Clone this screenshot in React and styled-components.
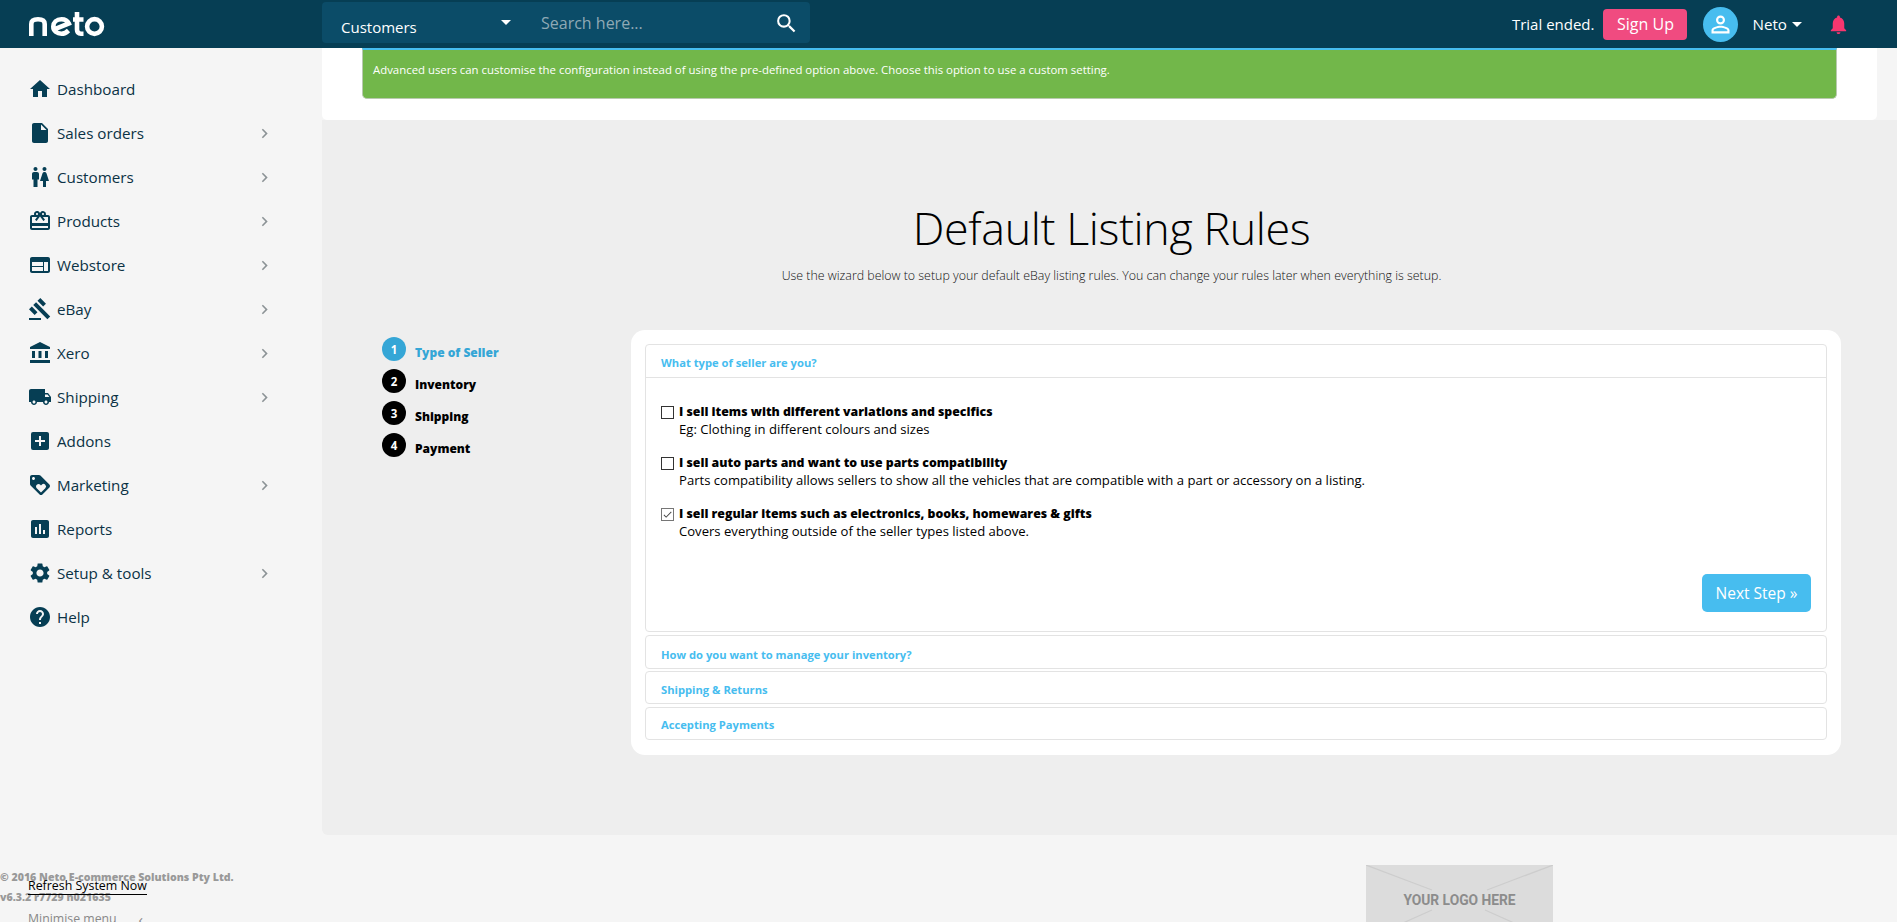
import React from 'react';
import styled, { createGlobalStyle } from 'styled-components';
import {
  MdHome, MdInsertDriveFile, MdWc, MdCardGiftcard, MdWeb, MdGavel, MdAccountBalance,
  MdLocalShipping, MdAddBox, MdLoyalty, MdAssessment, MdSettings, MdHelp, MdChevronRight,
  MdSearch, MdPersonOutline, MdNotifications, MdArrowDropDown, MdCheck,
} from 'react-icons/md';

const Global = createGlobalStyle`
  html, body { margin: 0; padding: 0; height: 922px; overflow: hidden; background: #f5f5f5; }
  body { font-family: "Open Sans", "Noto Sans", sans-serif; color: #000; }
  * { box-sizing: border-box; }
`;

const Page = styled.div`
  width: 1897px; height: 922px; overflow: hidden; display: flex; flex-direction: column;
`;
const Header = styled.header`
  height: 48px; flex: none; background: #063e54; display: flex; align-items: flex-start; color: #fff;
`;
const LogoSlot = styled.div`
  width: 322px; height: 48px; padding: 11px 0 0 28px; flex: none;
`;
const SearchBar = styled.div`
  width: 488px; height: 41px; margin-top: 2px; background: #0b4c68; border-radius: 4px;
  display: flex; align-items: flex-start; position: relative;
`;
const SearchScope = styled.div`
  width: 219px; padding: 15px 0 0 19px; font-size: 15px; line-height: 20px; flex: none; position: relative;
`;
const ScopeCaret = styled.span`
  position: absolute; left: 172px; top: 8px; display: flex; font-size: 24px;
`;
const SearchHint = styled.div`
  flex: 1; padding-top: 10px; font-size: 16px; line-height: 22px; color: #8fa9b5;
`;
const SearchIcon = styled.div`
  width: 36px; padding-top: 9px; display: flex; font-size: 25px;
`;
const HeadRight = styled.div`
  margin-left: auto; height: 48px; display: flex; align-items: center; padding-right: 47px;
`;
const Trial = styled.span`
  font-size: 15px; margin-right: 9px;
`;
const SignUp = styled.span`
  width: 84px; height: 31px; background: #f04b80; border-radius: 4px; font-size: 16px;
  display: flex; align-items: center; justify-content: center; margin-right: 16px;
`;
const Avatar = styled.span`
  width: 35px; height: 35px; background: #47bdef; border-radius: 50%; display: flex;
  align-items: center; justify-content: center; font-size: 27px; margin-right: 14px;
`;
const UserName = styled.span`
  font-size: 15.2px; display: flex; align-items: center; margin-right: 24px;
`;
const UserCaret = styled.span`
  display: flex; font-size: 24px; margin: 0 -6px 0 -2px;
`;
const Bell = styled.span`
  display: flex; font-size: 23px; color: #f8366f;
`;

const Body = styled.div`
  flex: 1; display: flex; min-height: 0;
`;
const Sidebar = styled.aside`
  width: 322px; flex: none; display: flex; flex-direction: column; position: relative;
`;
const Nav = styled.nav`
  padding: 19px 0 0 28px; display: flex; flex-direction: column;
`;
const NavRow = styled.div`
  height: 44px; display: flex; align-items: center; position: relative; width: 246px; color: #0b3245;
  font-size: 15.2px;
`;
const NavIcon = styled.span`
  width: 29px; flex: none; font-size: 24px; display: flex; color: #063e54;
`;
const NavChevron = styled.span`
  margin-left: auto; display: flex; font-size: 19px; color: #8c9396;
`;
const SideFoot = styled.div`
  position: absolute; left: 0; top: 816px; width: 322px;
`;
const Copyright = styled.div`
  position: absolute; left: 0; top: 3px; font-size: 10.6px; line-height: 20px; font-weight: 800; color: #999; white-space: nowrap;
`;
const Refresh = styled.a`
  position: absolute; left: 28px; top: 14px; font-size: 12.4px; line-height: 16px; color: #000;
  border-bottom: 1px solid #000; white-space: nowrap;
`;
const Minimise = styled.div`
  position: absolute; left: 28px; top: 46px; width: 115px; display: flex; align-items: center;
  justify-content: space-between; font-size: 12.3px; line-height: 18px; color: #888;
`;
const SmallChevron = styled.span`
  font-size: 15px; line-height: 18px;
`;

const Main = styled.main`
  flex: 1; display: flex; flex-direction: column; min-width: 0;
`;
const TopCard = styled.div`
  height: 72px; margin-right: 20px; background: #fff; border-radius: 0 0 5px 5px; padding: 0 40px 0 40px; flex: none;
`;
const Banner = styled.div`
  height: 51px; background: #72b74a; border-top: 2px solid #47bdef; border-bottom: 1px solid #b9c9b0;
  border-right: 1px solid #b9c9b0; border-left: 1px solid #b9c9b0; border-radius: 0 0 5px 5px; color: #fff; font-size: 11.4px;
  padding: 12px 0 0 10px; line-height: 16px;
`;
const Stage = styled.div`
  height: 715px; flex: none; background: #eee; border-radius: 0 0 0 6px; position: relative; padding-top: 78px;
`;
const Title = styled.h1`
  margin: 0; padding-left: 4px; text-align: center; font-weight: 300; font-size: 44.8px; line-height: 60px; color: #000; letter-spacing: -0.4px;
`;
const Subtitle = styled.p`
  margin: 9px 0 0; padding-left: 4px; text-align: center; font-size: 12.4px; font-weight: 300; line-height: 18px; color: #111;
`;
const Wizard = styled.div`
  display: flex; margin-top: 45px; padding-left: 60px;
`;
const Steps = styled.ol`
  list-style: none; margin: 7px 0 0; padding: 0; width: 249px; flex: none; display: flex; flex-direction: column; gap: 8px;
`;
const Step = styled.li`
  height: 24px; display: flex; align-items: center; gap: 9px; font-size: 12px; font-weight: 800;
  color: ${p => (p.$active ? '#35a6d6' : '#000')};
`;
const StepLabel = styled.span`
  padding-top: 8px; line-height: 16px;
`;
const StepDot = styled.span`
  width: 24px; height: 24px; border-radius: 50%; display: flex; align-items: center; justify-content: center;
  font-size: 11.5px; font-weight: 700; color: #fff; background: ${p => (p.$active ? '#35a6d6' : '#000')};
`;
const Card = styled.section`
  width: 1210px; height: 425px; background: #fff; border-radius: 14px; padding: 14px; display: flex; flex-direction: column; gap: 2.5px;
`;
const Panel = styled.div`
  border: 1px solid #e3e3e3; border-radius: 4px; background: #fff; display: flex; flex-direction: column;
  height: ${p => p.$h}px;
`;
const PanelHead = styled.div`
  height: ${p => (p.$open ? '33px' : 'auto')}; flex: ${p => (p.$open ? 'none' : '1')}; padding: ${p => p.$top}px 15px 0;
  font-size: 11.2px; font-weight: 700; line-height: 16px; color: #47bdef;
  ${p => p.$open && 'border-bottom: 1px solid #e3e3e3;'}
`;
const PanelBody = styled.div`
  flex: 1; padding: 25px 15px 0; display: flex; flex-direction: column; gap: 16px; position: relative;
`;
const Option = styled.div`
  display: flex; gap: 5px;
`;
const Box = styled.span`
  width: 13px; height: 13px; margin-top: 3px; flex: none; border: 1px solid ${p => (p.$on ? '#767676' : '#333')}; background: #fff;
  display: flex; align-items: center; justify-content: center; font-size: 15px; color: #444;
`;
const OptionText = styled.div`
  font-size: 13.1px; line-height: 17px; color: #000;
`;
const OptionTitle = styled.div`
  font-weight: 800; font-size: 12.3px; line-height: 18px;
`;
const NextButton = styled.button`
  position: absolute; right: 15px; bottom: 19px; width: 109px; height: 38px; border: 0; border-radius: 5px; background: #47bdef;
  color: #fff; font: 400 15.5px "Open Sans", sans-serif; padding: 0;
`;

const Footer = styled.footer`
  flex: 1; position: relative; display: flex; padding: 30px 0 0 1044px;
`;
const LogoPlaceholder = styled.svg`
  display: block; flex: none;
`;

const NetoLogo = () => (
  <svg width="77" height="26" viewBox="0 0 77 26" fill="none" stroke="#fff" strokeWidth="4.6">
    <path d="M3.3 25V13C3.3 9.5 6 8.3 10 8.3S16.7 9.5 16.7 13V25" />
    <path d="M25 18.8 40.8 12.5C39.5 9.5 36.5 8.3 33.5 8.3 28.5 8.3 25.3 11.5 25.3 15.5 25.3 20 29 22.7 33.5 22.7 36 22.7 38.5 21.5 40.5 19.5" />
    <path d="M49 1V18.5C49 21.5 50.5 22.7 53 22.7H55.5M45 8.5H55.5" />
    <circle cx="66.5" cy="15.5" r="7.4" />
  </svg>
);

const items = [
  ['Dashboard', MdHome, false],
  ['Sales orders', MdInsertDriveFile, true],
  ['Customers', MdWc, true],
  ['Products', MdCardGiftcard, true],
  ['Webstore', MdWeb, true],
  ['eBay', MdGavel, true],
  ['Xero', MdAccountBalance, true],
  ['Shipping', MdLocalShipping, true],
  ['Addons', MdAddBox, false],
  ['Marketing', MdLoyalty, true],
  ['Reports', MdAssessment, false],
  ['Setup & tools', MdSettings, true],
  ['Help', MdHelp, false],
];
const steps = ['Type of Seller', 'Inventory', 'Shipping', 'Payment'];
const options = [
  ['I sell items with different variations and specifics', 'Eg: Clothing in different colours and sizes', false],
  ['I sell auto parts and want to use parts compatibility', 'Parts compatibility allows sellers to show all the vehicles that are compatible with a part or accessory on a listing.', false],
  ['I sell regular items such as electronics, books, homewares & gifts', 'Covers everything outside of the seller types listed above.', true],
];

export default function App() {
  return (
    <Page>
      <Global />
      <Header>
        <LogoSlot><NetoLogo /></LogoSlot>
        <SearchBar>
          <SearchScope>Customers<ScopeCaret><MdArrowDropDown /></ScopeCaret></SearchScope>
          <SearchHint>Search here...</SearchHint>
          <SearchIcon><MdSearch /></SearchIcon>
        </SearchBar>
        <HeadRight>
          <Trial>Trial ended.</Trial>
          <SignUp>Sign Up</SignUp>
          <Avatar><MdPersonOutline /></Avatar>
          <UserName>Neto <UserCaret><MdArrowDropDown /></UserCaret></UserName>
          <Bell><MdNotifications /></Bell>
        </HeadRight>
      </Header>
      <Body>
        <Sidebar>
          <Nav>
            {items.map(([label, Icon, more]) => (
              <NavRow key={label}>
                <NavIcon><Icon /></NavIcon>
                {label}
                {more && <NavChevron><MdChevronRight /></NavChevron>}
              </NavRow>
            ))}
          </Nav>
          <SideFoot>
            <Copyright>© 2016 Neto E-commerce Solutions Pty Ltd.<br />v6.3.2 r7729 n021635</Copyright>
            <Refresh>Refresh System Now</Refresh>
            <Minimise>Minimise menu <SmallChevron>‹</SmallChevron></Minimise>
          </SideFoot>
        </Sidebar>
        <Main>
          <TopCard>
            <Banner>Advanced users can customise the configuration instead of using the pre-defined option above. Choose this option to use a custom setting.</Banner>
          </TopCard>
          <Stage>
            <Title>Default Listing Rules</Title>
            <Subtitle>Use the wizard below to setup your default eBay listing rules. You can change your rules later when everything is setup.</Subtitle>
            <Wizard>
              <Steps>
                {steps.map((s, i) => (
                  <Step key={s} $active={i === 0}>
                    <StepDot $active={i === 0}>{i + 1}</StepDot>
                    <StepLabel>{s}</StepLabel>
                  </Step>
                ))}
              </Steps>
              <Card>
                <Panel $h={288}>
                  <PanelHead $open $top={10}>What type of seller are you?</PanelHead>
                  <PanelBody>
                    {options.map(([t, d, on]) => (
                      <Option key={t}>
                        <Box $on={on}>{on && <MdCheck />}</Box>
                        <OptionText>
                          <OptionTitle>{t}</OptionTitle>
                          {d}
                        </OptionText>
                      </Option>
                    ))}
                    <NextButton>Next Step »</NextButton>
                  </PanelBody>
                </Panel>
                <Panel $h={34}><PanelHead $top={11}>How do you want to manage your inventory?</PanelHead></Panel>
                <Panel $h={33}><PanelHead $top={10}>Shipping &amp; Returns</PanelHead></Panel>
                <Panel $h={33}><PanelHead $top={9}>Accepting Payments</PanelHead></Panel>
              </Card>
            </Wizard>
          </Stage>
          <Footer>
            <LogoPlaceholder width="187" height="72" viewBox="0 0 187 72">
              <rect width="187" height="72" fill="#dcdcdc" />
              <g stroke="#cdcdcd" strokeWidth="1.2">
                <path d="M0 0 66 25M187 0 121 25M66 45 28 62M119 45 157 62" />
              </g>
              <text x="93.5" y="40" textAnchor="middle" fontFamily="Roboto, sans-serif" fontWeight="700" fontSize="13.8" fill="#8c8c8c">YOUR LOGO HERE</text>
            </LogoPlaceholder>
          </Footer>
        </Main>
      </Body>
    </Page>
  );
}
